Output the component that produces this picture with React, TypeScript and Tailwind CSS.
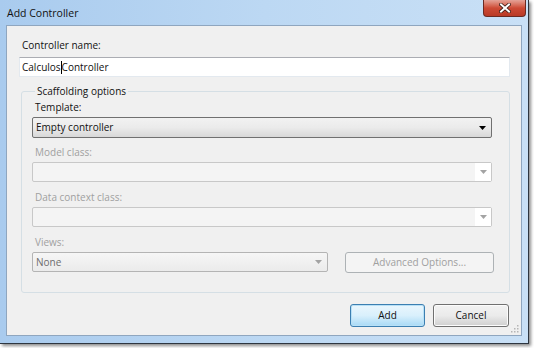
import { ReactNode } from "react";

const font = { fontFamily: '"Open Sans", "Noto Sans", sans-serif' };

function Arrow({ disabled }: { disabled?: boolean }) {
  return (
    <svg width="7" height="4" viewBox="0 0 7 4" className="block">
      <path d="M0 0h7L3.5 4z" fill={disabled ? "#a3a3a3" : "#000"} />
    </svg>
  );
}

function Label({ children, disabled }: { children: ReactNode; disabled?: boolean }) {
  return (
    <div
      className={
        "h-[16px] leading-[16px] pl-[3px] " +
        (disabled ? "text-[#a0a0a0]" : "text-[#111]")
      }
    >
      {children}
    </div>
  );
}

function DisabledCombo() {
  return (
    <div className="mt-[2px] h-[20px] w-[460px] flex border border-[#c8c8c8] rounded-[2px] bg-[#f4f4f4]">
      <div className="flex-1" />
      <div className="w-[16px] bg-white flex items-center justify-center">
        <Arrow disabled />
      </div>
    </div>
  );
}

export default function App() {
  return (
    <div className="w-[534px] h-[348px] bg-white overflow-hidden text-[10px]" style={font}>
      <div className="w-[529px] h-[344px] bg-gradient-to-r from-[#a9cbee] via-[#bcd8f3] to-[#c9e0f6] border-r border-b border-[#2e3640] shadow-[2px_2px_3px_rgba(0,0,0,0.45)] flex flex-col">
        {/* title bar */}
        <div className="h-[25px] flex items-start justify-between">
          <div className="pl-[7px] pt-[5px] text-[10.5px] leading-[16px] text-[#111]">Add Controller</div>
          <div className="mr-[2px] w-[43px] h-[17px] rounded-b-[4px] border border-t-0 border-[#6b2a22] bg-gradient-to-b from-[#e4a297] via-[#cd4a35] to-[#b93a26] flex items-center justify-center">
            <svg width="12" height="10" viewBox="0 0 12 10">
              <path d="M2 1.5l8 7M10 1.5l-8 7" stroke="#3a1a14" strokeWidth="3.6" strokeLinecap="square" />
              <path d="M2 1.5l8 7M10 1.5l-8 7" stroke="#fff" strokeWidth="2" strokeLinecap="square" />
            </svg>
          </div>
        </div>

        {/* client area */}
        <div className="mx-[6px] mb-[7px] flex-1 border border-[#8fa6bf] bg-[#f0f0f0] flex flex-col pl-[12px] pr-[12px] relative">
          <div className="mt-[11px] h-[16px] leading-[16px] pl-[3px] text-[#111]">Controller name:</div>
          <div className="mt-[4px] h-[20px] w-[491px] bg-white border border-[#e3e9ef] border-t-[#abadb3] flex items-center pl-[2px] text-[#111]">
            <span>Calculos</span>
            <span className="inline-block w-px h-[13px] bg-black" />
            <span>Controller</span>
          </div>

          <fieldset className="mt-[7px] ml-[2px] w-[489px] h-[209px] border border-[#d5dfe5] rounded-[3px] px-[10px]">
            <legend className="ml-[3px] px-[2px] leading-[14px] text-[#111]">Scaffolding options</legend>
            <div className="mt-[1px]">
              <Label>Template:</Label>
              <div className="mt-[2px] h-[21px] w-[460px] flex items-center border border-[#707070] rounded-[2px] bg-gradient-to-b from-[#f2f2f2] via-[#ebebeb] to-[#d8d8d8] pl-[3px] pr-[5px]">
                <span className="flex-1 text-[#111]">Empty controller</span>
                <Arrow />
              </div>
            </div>
            <div className="mt-[6px]">
              <Label disabled>Model class:</Label>
              <DisabledCombo />
            </div>
            <div className="mt-[7px]">
              <Label disabled>Data context class:</Label>
              <DisabledCombo />
            </div>
            <div className="mt-[7px]">
              <Label disabled>Views:</Label>
              <div className="mt-[2px] flex gap-[17px]">
                <div className="h-[20px] w-[296px] flex items-center border border-[#b4b4b4] rounded-[2px] bg-gradient-to-b from-[#f6f6f6] to-[#ebebeb] pl-[3px] pr-[5px]">
                  <span className="flex-1 text-[#6d6d6d]">None</span>
                  <Arrow disabled />
                </div>
                <div className="h-[21px] w-[149px] flex items-center justify-center border border-[#adb2b5] rounded-[3px] bg-[#f4f4f4] text-[#a0a0a0]">
                  Advanced Options...
                </div>
              </div>
            </div>
          </fieldset>

          <div className="mt-[11px] flex justify-end gap-[8px]">
            <div className="h-[23px] w-[75px] flex items-center justify-center rounded-[3px] border border-[#3c7fb1] bg-gradient-to-b from-[#eaf6fd] via-[#d9f0fc] to-[#a7d9f5] shadow-[inset_0_0_0_1px_#b8e0f6] text-[#111]">
              Add
            </div>
            <div className="h-[23px] w-[76px] flex items-center justify-center rounded-[3px] border border-[#707070] bg-gradient-to-b from-[#f2f2f2] via-[#ebebeb] to-[#cfcfcf] shadow-[inset_0_0_0_1px_#fcfcfc] text-[#111]">
              Cancel
            </div>
          </div>

          <svg width="9" height="9" viewBox="0 0 9 9" className="absolute right-[2px] bottom-[2px]">
            {[
              [7, 1],
              [4, 4],
              [7, 4],
              [1, 7],
              [4, 7],
              [7, 7],
            ].map(([x, y], i) => (
              <rect key={i} x={x} y={y} width="1.5" height="1.5" fill="#b5b5b5" />
            ))}
          </svg>
        </div>
      </div>
    </div>
  );
}
